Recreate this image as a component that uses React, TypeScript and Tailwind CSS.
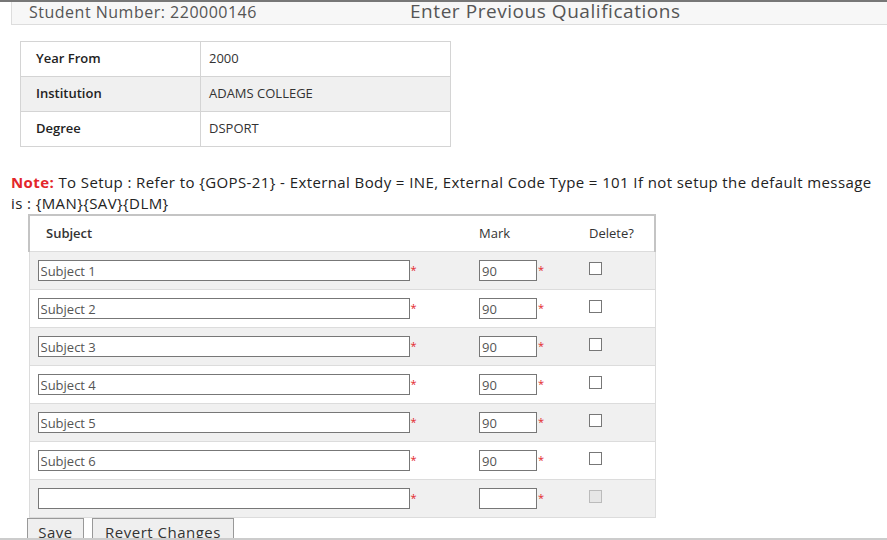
import React from 'react'

const subjects = ['Subject 1', 'Subject 2', 'Subject 3', 'Subject 4', 'Subject 5', 'Subject 6', '']

const font = { fontFamily: '"Open Sans", "Liberation Sans", sans-serif' }

const App = () => {
  return (
    <div className="w-[887px] h-[540px] overflow-hidden bg-white text-[#333] relative" style={font}>
      {/* 헤더 */}
      <div className="border-t-2 border-[#777]">
        <div className="ml-[11px] h-[23px] bg-[#f7f7f7] border-l border-b border-[#ddd] flex items-center text-[#555]">
          <span className="ml-[17px] w-[381px] text-[16px] tracking-[0.5px] leading-none -mt-[3px]">Student Number: 220000146</span>
          <span className="text-[19px] tracking-[0.55px] leading-none -mt-[3px]">Enter Previous Qualifications</span>
        </div>
      </div>

      {/* 자격 정보 */}
      <table className="ml-[20px] mt-[16px] border-collapse text-[13px]">
        <tbody>
          {[
            ['Year From', '2000'],
            ['Institution', 'ADAMS COLLEGE'],
            ['Degree', 'DSPORT'],
          ].map(([k, v], i) => (
            <tr key={k} className={i === 1 ? 'bg-[#f0f0f0]' : 'bg-white'}>
              <td className="w-[180px] h-[35px] border border-[#d4d4d4] pl-[15px] font-semibold text-[#222]">{k}</td>
              <td className="w-[250px] h-[35px] border border-[#d4d4d4] pl-[8px] text-[#333]">{v}</td>
            </tr>
          ))}
        </tbody>
      </table>

      {/* 노트 */}
      <div className="ml-[11px] mt-[25px] text-[15px] tracking-[0.4px] leading-[21px] text-[#222] w-[870px]">
        <span className="text-[#e3262b] font-bold">Note:</span> To Setup : Refer to {'{GOPS-21}'} - External Body = INE,
        External Code Type = 101 If not setup the default message is : {'{MAN}{SAV}{DLM}'}
      </div>

      {/* 과목 테이블 */}
      <table className="ml-[28px] border-collapse text-[13px]">
        <thead>
          <tr>
            <th className="h-[36px] w-[441px] text-left pl-[16px] font-semibold border-t-2 border-l-2 border-[#c4c4c4]">Subject</th>
            <th className="h-[36px] w-[110px] text-left pl-[9px] font-normal border-t-2 border-[#c4c4c4]">Mark</th>
            <th className="h-[36px] w-[75px] text-left pl-[9px] font-normal border-t-2 border-r-2 border-[#c4c4c4]">Delete?</th>
          </tr>
        </thead>
        <tbody>
          {subjects.map((s, i) => (
            <tr key={i} className={`h-[38px] border border-[#dcdcdc] ${i % 2 === 0 ? 'bg-[#f0f0f0]' : 'bg-white'}`}>
              <td className="pl-[8px] border-l border-[#dcdcdc]">
                <div className="flex items-start">
                  <input
                    defaultValue={s}
                    className="w-[372px] h-[21px] border border-[#777] bg-white px-[2px] pt-[2px] text-[13px] text-[#555] outline-none"
                  />
                  <span className="text-[#e3262b] text-[11px] leading-none mt-[4px] ml-[1px]">*</span>
                </div>
              </td>
              <td className="pl-[9px]">
                <div className="flex items-start">
                  <input
                    defaultValue={s ? '90' : ''}
                    className="w-[58px] h-[21px] border border-[#777] bg-white px-[2px] pt-[2px] text-[13px] text-[#555] outline-none"
                  />
                  <span className="text-[#e3262b] text-[11px] leading-none mt-[4px] ml-[1px]">*</span>
                </div>
              </td>
              <td className="pl-[9px] align-top pt-[10px] border-r border-[#dcdcdc]">
                <span
                  className={`block w-[13px] h-[13px] border ${s ? 'border-[#777] bg-white' : 'border-[#bbb] bg-[#e6e6e6]'}`}
                />
              </td>
            </tr>
          ))}
        </tbody>
      </table>

      {/* 버튼 */}
      <div className="ml-[27px] flex gap-[8px]">
        <button className="h-[26px] w-[57px] bg-[#efefef] border border-[#999] text-[15px] tracking-[0.5px] text-[#333] leading-none pt-[4px]">Save</button>
        <button className="h-[26px] w-[142px] bg-[#efefef] border border-[#999] text-[15px] tracking-[0.5px] text-[#333] leading-none pt-[4px]">Revert Changes</button>
      </div>

      <div className="absolute left-0 right-0 bottom-0 h-[2px] bg-[#ccc]" />
    </div>
  )
}

export default App
